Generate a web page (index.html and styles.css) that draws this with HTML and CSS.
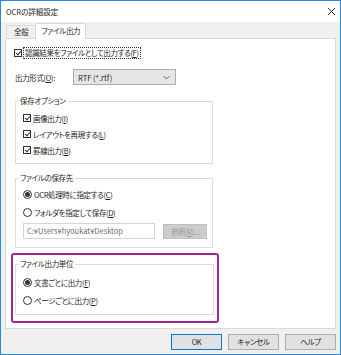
FILE: index.html
```html
<!DOCTYPE html>
<html lang="ja">
<head>
  <meta charset="UTF-8">
  <title>OCRの詳細設定</title>
  <link rel="stylesheet" href="styles.css">
</head>
<body>
  <div class="window">
    <div class="titlebar">
      <span class="title">OCRの詳細設定</span>
      <svg class="close" width="9" height="9" viewBox="0 0 9 9">
        <path d="M1 1 L8 8 M8 1 L1 8" stroke="#333" stroke-width="1" fill="none"/>
      </svg>
    </div>

    <div class="tabs">
      <div class="tab">全般</div>
      <div class="tab active">ファイル出力</div>
    </div>

    <div class="panel">
      <div class="row first">
        <span class="check on"></span>
        <span class="focus">認識結果をファイルとして出力する(<u>F</u>)</span>
      </div>

      <div class="row format">
        <span class="format-label">出力形式(<u>O</u>):</span>
        <div class="select">
          <span>RTF (*.rtf)</span>
          <svg width="7" height="5" viewBox="0 0 7 5">
            <path d="M0.5 1 L3.5 4 L6.5 1" stroke="#555" stroke-width="0.8" fill="none"/>
          </svg>
        </div>
      </div>

      <fieldset class="group options">
        <legend>保存オプション</legend>
        <div class="row"><span class="check on"></span>画像出力(<u>I</u>)</div>
        <div class="row"><span class="check on"></span>レイアウトを再現する(<u>L</u>)</div>
        <div class="row"><span class="check on"></span>罫線出力(<u>B</u>)</div>
      </fieldset>

      <fieldset class="group dest">
        <legend>ファイルの保存先</legend>
        <div class="row"><span class="radio on"></span>OCR処理時に指定する(<u>C</u>)</div>
        <div class="row"><span class="radio"></span>フォルダを指定して保存(<u>D</u>)</div>
        <div class="path-row">
          <div class="path">C:¥Users¥hyoukat¥Desktop</div>
          <div class="browse">参照(<u>R</u>)...</div>
        </div>
      </fieldset>

      <div class="highlight">
        <fieldset class="group unit">
          <legend>ファイル出力単位</legend>
          <div class="row"><span class="radio on"></span>文書ごとに出力(<u>F</u>)</div>
          <div class="row"><span class="radio"></span>ページごとに出力(<u>P</u>)</div>
        </fieldset>
      </div>
    </div>

    <div class="footer">
      <div class="btn default">OK</div>
      <div class="btn">キャンセル</div>
      <div class="btn">ヘルプ</div>
    </div>
  </div>
</body>
</html>
```

FILE: styles.css
```css
* {
box-sizing: border-box;
}

body {
margin: 0;
padding: 0;
font-family: "Noto Sans CJK JP", "Noto Sans", sans-serif;
font-size: 7.5px;
font-feature-settings: "palt";
letter-spacing: -0.35px;
color: #1e1e1e;
}

u {
text-decoration: underline;
text-underline-offset: 1px;
}

.window {
width: 341px;
height: 355px;
border: 1px solid #2b88d8;
background-color: #f0f0f0;
}

.titlebar {
height: 21px;
background-color: #fff;
display: flex;
align-items: center;
justify-content: space-between;
padding: 0 4px 0 5px;
}

.title {
font-size: 7.5px;
letter-spacing: 0;
}

/* tabs */
.tabs {
display: flex;
align-items: flex-end;
margin-top: 1px;
padding-left: 5px;
height: 15px;
position: relative;
z-index: 1;
}

.tab {
height: 13px;
line-height: 12px;
padding: 0 7px;
border: 1px solid #d9d9d9;
border-bottom: none;
background-color: #f0f0f0;
}

.tab.active {
height: 16px;
margin-bottom: -1px;
line-height: 14px;
padding: 0 5px;
background-color: #fff;
border-left: none;
}

/* panel */
.panel {
height: 291px;
margin: 0 4px;
padding: 8px 0 0 8px;
background-color: #fff;
border: 1px solid #d9d9d9;
}

.row {
display: flex;
align-items: center;
height: 12px;
white-space: nowrap;
}

.check {
width: 8px;
height: 8px;
border: 1px solid #333;
margin-right: 2px;
position: relative;
flex-shrink: 0;
}

.check.on::after {
content: "";
position: absolute;
left: 2px;
top: 0px;
width: 2px;
height: 4px;
border-right: 1px solid #333;
border-bottom: 1px solid #333;
transform: rotate(40deg);
}

.radio {
width: 9px;
height: 9px;
border: 1px solid #333;
border-radius: 50%;
margin-right: 2px;
display: flex;
align-items: center;
justify-content: center;
flex-shrink: 0;
}

.radio.on::after {
content: "";
width: 5px;
height: 5px;
border-radius: 50%;
background-color: #333;
}

.focus {
outline: 1px dotted #333;
padding: 0 1px;
line-height: 10px;
}

.row.format {
height: 16px;
margin-top: 10px;
}

.format-label {
width: 59px;
padding-left: 1px;
}

.select {
width: 103px;
height: 16px;
display: flex;
align-items: center;
justify-content: space-between;
padding: 0 5px 0 4px;
background-color: #e5e5e5;
border: 1px solid #adadad;
letter-spacing: 0;
}

/* group boxes */
.group {
margin: 0 0 0 1px;
padding: 0 0 0 7px;
border: 1px solid #dcdcdc;
min-width: 0;
}

.group legend {
margin-left: -5px;
padding: 0 2px;
line-height: 10px;
}

.options {
width: 198px;
margin-top: 11px;
padding-top: 6px;
padding-bottom: 7px;
display: flex;
flex-direction: column;
gap: 4px;
}

.dest {
width: 198px;
margin-top: 9px;
padding-top: 5px;
padding-bottom: 8px;
}

.dest .row + .row {
margin-top: 6px;
}

.path-row {
display: flex;
gap: 8px;
margin-top: 5px;
}

.path {
width: 132px;
height: 16px;
line-height: 14px;
padding-left: 3px;
border: 1px solid #d5d5d5;
color: #6d6d6d;
letter-spacing: 0;
}

.browse {
width: 44px;
height: 15px;
margin-top: 1px;
line-height: 13px;
text-align: center;
background-color: #cccccc;
border: 1px solid #bfbfbf;
color: #9a9a9a;
}

/* highlighted unit group */
.highlight {
width: 208px;
height: 70px;
margin: 5px 0 0 -3px;
padding: 4px 0 0 2px;
border: 2px solid #a0288f;
border-radius: 3px;
}

.unit {
width: 199px;
margin-left: 0;
padding-top: 7px;
padding-bottom: 8px;
}

.unit .row + .row {
margin-top: 6px;
}

/* footer */
.footer {
display: flex;
justify-content: flex-end;
gap: 6px;
margin-top: 5px;
padding-right: 4px;
}

.btn {
width: 51px;
height: 16px;
line-height: 14px;
text-align: center;
background-color: #e1e1e1;
border: 1px solid #adadad;
}

.btn.default {
border-color: #0078d7;
}
```
